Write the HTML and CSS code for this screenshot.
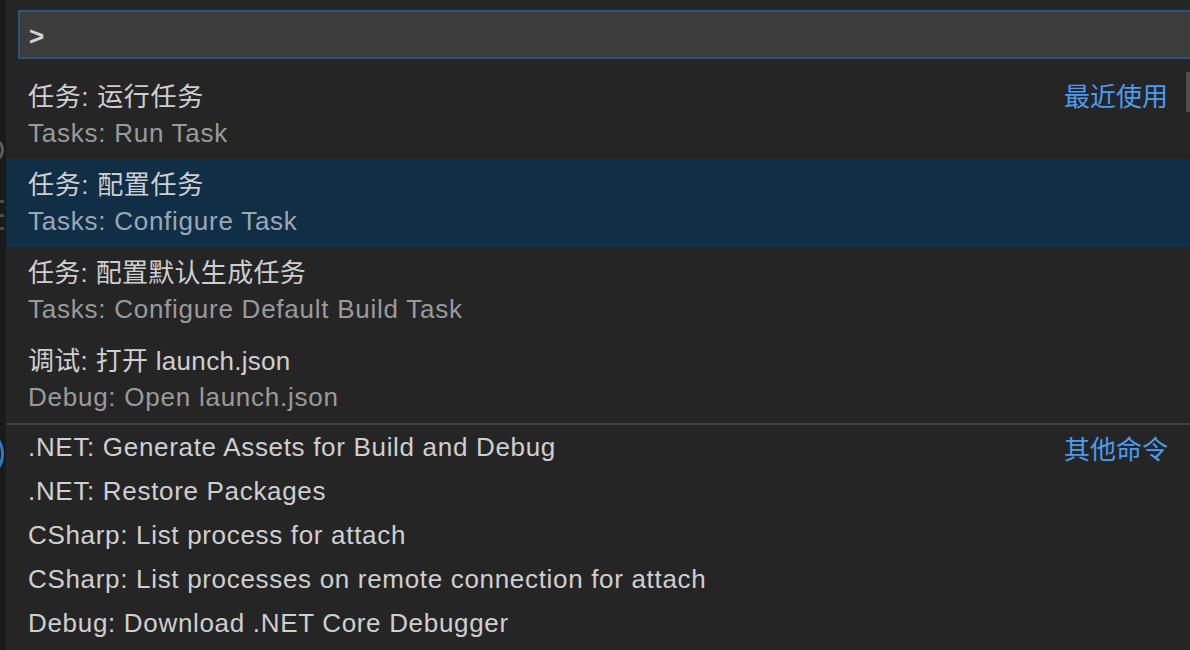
FILE: index.html
```html
<!DOCTYPE html>
<html lang="zh-CN">
<head>
<meta charset="utf-8">
<title>Command Palette</title>
<link rel="stylesheet" href="styles.css">
</head>
<body>
<div class="page">
  <div class="editor-edge">
    <div class="ghost g1"></div>
    <div class="ghost g2"></div>
    <div class="ghost g3"></div>
  </div>
  <div class="widget">
    <div class="input-wrap">
      <div class="input">&gt;</div>
    </div>
    <div class="list">
      <div class="row two">
        <div class="label-line"><span class="label">任务: 运行任务</span><span class="group">最近使用</span></div>
        <div class="desc">Tasks: Run Task</div>
      </div>
      <div class="row two selected">
        <div class="label-line"><span class="label">任务: 配置任务</span></div>
        <div class="desc">Tasks: Configure Task</div>
      </div>
      <div class="row two">
        <div class="label-line"><span class="label cjk">任务: 配置默认生成任务</span></div>
        <div class="desc">Tasks: Configure Default Build Task</div>
      </div>
      <div class="row two">
        <div class="label-line"><span class="label cjk">调试: 打开 launch.json</span></div>
        <div class="desc">Debug: Open launch.json</div>
      </div>
      <div class="separator"></div>
      <div class="row one">
        <div class="label-line"><span class="label">.NET: Generate Assets for Build and Debug</span><span class="group">其他命令</span></div>
      </div>
      <div class="row one">
        <div class="label-line"><span class="label">.NET: Restore Packages</span></div>
      </div>
      <div class="row one">
        <div class="label-line"><span class="label">CSharp: List process for attach</span></div>
      </div>
      <div class="row one">
        <div class="label-line"><span class="label">CSharp: List processes on remote connection for attach</span></div>
      </div>
      <div class="row one">
        <div class="label-line"><span class="label">Debug: Download .NET Core Debugger</span></div>
      </div>
    </div>
    <div class="scrollbar"></div>
  </div>
</div>
</body>
</html>
```
FILE: styles.css
```css
* { box-sizing: border-box; }
html, body {
  margin: 0;
  padding: 0;
  width: 1190px;
  height: 650px;
  overflow: hidden;
  background: #1b1b1b;
}
.page {
  display: flex;
  width: 1190px;
  height: 650px;
  font-family: "Liberation Sans", "Noto Sans CJK SC", sans-serif;
}
.editor-edge {
  width: 6px;
  flex: none;
  background: #1a1a1a;
  position: relative;
  overflow: hidden;
}
.ghost {
  position: absolute;
}
.g1 {
  top: 138px;
  left: -18px;
  width: 22px;
  height: 24px;
  border: 3px solid #5c5c5c;
  border-radius: 50%;
}
.g2 {
  top: 200px;
  left: -10px;
  width: 14px;
  height: 30px;
  border-top: 3px solid #4c4c4c;
  border-bottom: 3px solid #4c4c4c;
}
.g2::after {
  content: "";
  position: absolute;
  left: 0;
  right: 0;
  top: 11px;
  border-top: 3px solid #4c4c4c;
}
.g3 {
  top: 434px;
  left: -24px;
  width: 28px;
  height: 40px;
  border: 3px solid #2f78c8;
  border-radius: 50%;
}
.widget {
  flex: 1;
  background: #252526;
  position: relative;
  display: flex;
  flex-direction: column;
  padding: 10px 0 0 0;
}
.input-wrap {
  padding: 0 0 0 12px;
}
.input {
  height: 49px;
  background: #3c3c3c;
  border: 2px solid #2a5379;
  border-right: none;
  color: #d4d4d4;
  font-size: 26px;
  line-height: 48px;
  padding-left: 9px;
  font-weight: bold;
}
.list {
  margin-top: 12px;
  display: flex;
  flex-direction: column;
}
.row {
  padding: 0 22px 0 22px;
  color: #cccccc;
}
.row.two {
  height: 88px;
  padding-top: 4px;
}
.row.one {
  height: 44px;
  padding-top: 3px;
}
.row.selected {
  background: #112e47;
}
.label-line {
  display: flex;
  justify-content: space-between;
  align-items: center;
  height: 38px;
  font-size: 26px;
  letter-spacing: 0.68px;
}
.label { color: #cfcfcf; }
.label.cjk { letter-spacing: 0.3px; }
.group {
  color: #4b9cf0;
  letter-spacing: 0;
}
.desc {
  margin-top: 2px;
  height: 36px;
  line-height: 36px;
  font-size: 26px;
  letter-spacing: 0.75px;
  color: #9a9a9a;
}
.selected .desc { color: #9aa8b5; }
.separator {
  height: 2px;
  background: #3e3e40;
}
.scrollbar {
  position: absolute;
  right: 0;
  top: 72px;
  width: 4px;
  height: 40px;
  background: #4f4f4f;
}
```
